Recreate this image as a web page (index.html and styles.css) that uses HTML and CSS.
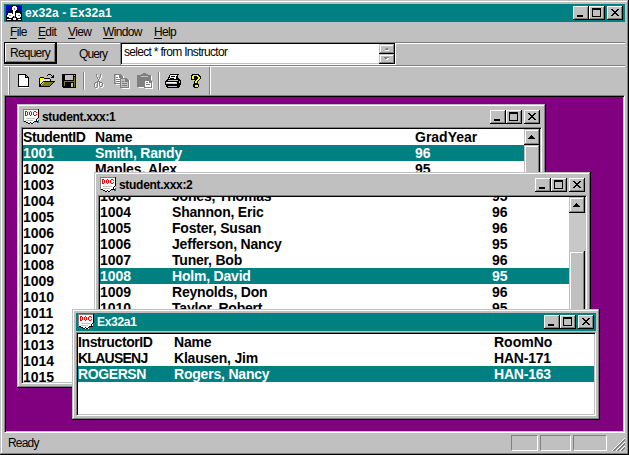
FILE: index.html
```
<!DOCTYPE html>
<html lang="en">
<head>
<meta charset="utf-8">
<title>ex32a - Ex32a1</title>
<link rel="stylesheet" href="styles.css">
</head>
<body>
<svg width="0" height="0" class="defs">
  <symbol id="doc" viewBox="0 0 16 16">
    <path fill="#fff" d="M1 1h14v11h-2v1h-2v2H9v-1H8v1H5v-1H4v-1H1z"/>
    <path fill="#808080" d="M0 0h15v1H0zM0 0h1v13H0z"/>
    <path fill="#000" d="M15 0h1v9h-1zM14 9h1v1h-1zM13 10h1v3h-1zM14 12h1v1h-1zM11 12h2v1h-2zM10 13h1v1h-1zM8 14h2v1H8zM7 13h1v1H7zM5 14h2v1H5zM3 13h2v1H3zM1 12h2v1H1z"/>
    <path fill="#c0c0c0" d="M3 9h9v1H3zM3 11h7v1H3z"/>
    <path fill="#008080" d="M14 13h2v1h-2zM15 11h1v2h-1z"/>
    <path fill="#f00" d="M2 2h1v5H2zM3 2h1v1H3zM3 6h1v1H3zM4 3h1v3H4zM7 2h1v1H7zM6 3h1v3H6zM8 3h1v3H8zM7 6h1v1H7zM11 2h2v1h-2zM10 3h1v3h-1zM11 6h2v1h-2zM13 3h1v1h-1zM13 5h1v1h-1z"/>
  </symbol>
  <symbol id="min" viewBox="0 0 16 14"><path d="M4 9h6v2H4z"/></symbol>
  <symbol id="max" viewBox="0 0 16 14"><path fill-rule="evenodd" d="M3 2h9v9H3zM4 4v6h7V4z"/></symbol>
  <symbol id="close" viewBox="0 0 16 14"><path d="M4 3h2v1H4zM10 3h2v1h-2zM5 4h2v1H5zM9 4h2v1H9zM6 5h4v1H6zM7 6h2v1H7zM6 7h4v1H6zM5 8h2v1H5zM9 8h2v1H9zM4 9h2v1H4zM10 9h2v1h-2z"/></symbol>
  <symbol id="up" viewBox="0 0 16 16"><path d="M7 6h1v1H7zM6 7h3v1H6zM5 8h5v1H5zM4 9h7v1H4z"/></symbol>
</svg>

<main class="app">
  <header class="title active">
    <svg class="ico" viewBox="0 0 16 16">
      <path fill="#000" d="M0 0h16v16H0z"/>
      <path fill="#0000c0" d="M0 0h6v5H3v3H0zM11 0h5v7h-3V5h-2zM0 8h2v2H0z"/>
      <path fill="#fff" d="M7 1h3v1h1v3h-1v1H7V5H6V2h1zM2 8h4v1h1v3H6v1H3v-1H1v-2h1zM10 8h4v1h1v3h-1v1h-3v-1h-1zM7 6h2v5H7zM1 14h4v1H1zM7 13h3v2H7zM12 14h3v1h-3z"/>
      <path fill="#808080" d="M8 3h1v2H8zM3 10h2v1H3zM12 10h2v1h-2zM8 11h1v2H8z"/>
    </svg>
    <h1 class="caption main-caption">ex32a - Ex32a1</h1>
    <div class="controls"><button><svg><use href="#min"/></svg></button><button><svg><use href="#max"/></svg></button><button class="x"><svg><use href="#close"/></svg></button></div>
  </header>
  <nav class="menu"><a><u>F</u>ile</a><a><u>E</u>dit</a><a><u>V</u>iew</a><a><u>W</u>indow</a><a><u>H</u>elp</a></nav>

  <section class="query">
    <button class="requery">Requery</button>
    <label class="qlabel">Query</label>
    <div class="edit"><span class="sql">select * from Instructor</span>
      <div class="spin">
        <div class="spin-btn"><svg viewBox="0 0 16 10"><path fill="#808080" d="M7 4h2v1H7zM6 5h3v1H6z"/><path fill="#fff" d="M6 6h4v1H6z"/></svg></div>
        <div class="spin-btn"><svg viewBox="0 0 16 10"><path fill="#808080" d="M5 3h5v1H5zM6 4h2v1H6z"/><path fill="#fff" d="M8 4h2v1H8zM7 5h2v1H7z"/></svg></div>
      </div>
    </div>
  </section>

  <section class="tools">
    <div class="tools-group">
      <svg class="t-new" viewBox="0 0 16 16"><path fill="#fff" d="M3 2h7v3h3v10H3z"/><path d="M2 1h8v1H2zM2 1h1v13H2zM2 13h11v1H2zM12 4h1v10h-1zM9 2h1v3H9zM9 4h4v1H9zM10 2h1v1h-1zM11 3h1v1h-1z"/></svg>
      <svg class="t-open" viewBox="0 0 16 16"><path fill="#ff0" d="M1 5h4v1h6v3H5v1H4v1H3v1H2v1H1z"/><path fill="#fff" d="M2 6h1v1H2zM4 6h1v1H4zM3 7h1v1H3zM5 7h1v1H5zM7 7h1v1H7zM9 7h1v1H9zM2 8h1v1H2zM1 9h1v1H1zM3 9h1v1H3z"/><path fill="#808000" d="M5 9h10v1h-1v1h-1v1h-1v1h-1v1H1v-1h1v-1h1v-1h1v-1h1z"/><path d="M1 4h4v1H1zM0 5h1v9H0zM5 5h6v1H5zM11 6h1v2h-1zM4 8h12v1H4zM3 9h1v1H3zM2 10h1v1H2zM1 11h1v2H1zM0 13h11v1H0zM11 12h1v1h-1zM12 11h1v1h-1zM13 10h1v1h-1zM14 9h1v1h-1zM9 1h3v1H9zM8 2h1v1H8zM12 2h1v1h-1zM14 2h1v3h-1zM12 4h3v1h-3zM13 3h1v1h-1z"/></svg>
      <svg class="t-save" viewBox="0 0 16 16"><path d="M1 1h14v14H2v-1H1z"/><path fill="#808000" d="M2 2h1v11h1v-4h9v5h1V4h-1v4H3V2z"/><path fill="#c0c0c0" d="M4 2h8v5H4zM13 2h1v1h-1zM10 10h2v4h-2z"/></svg>
      <i class="sep"></i>
      <svg class="t-cut" viewBox="0 0 16 16"><defs><path id="cut" d="M5 1h1v3H5zM9 1h1v3H9zM6 4h1v2H6zM8 4h1v2H8zM7 6h1v3H7zM6 8h1v1H6zM8 8h1v1H8zM5 9h2v1H5zM8 9h3v1H8zM3 10h1v4H3zM6 10h1v4H6zM4 9h2v1H4zM4 14h2v1H4zM8 10h1v3H8zM11 10h1v3h-1zM9 13h2v1H9z"/></defs><use href="#cut" x="1" y="1" fill="#fff"/><use href="#cut" fill="#808080"/></svg>
      <svg class="t-copy" viewBox="0 0 17 16"><path fill="#fff" d="M2 2h6v1h2v9H2zM8 6h6v1h2v9H8z"/><path fill="#808080" fill-rule="evenodd" d="M0 1h6l3 3v7H0zM1 2v8h7V5H5V2zM2 4h2v1H2zM2 6h5v1H2zM2 8h5v1H2z"/><path fill="#c0c0c0" d="M7 5h5l3 3v6H7z"/><path fill="#808080" fill-rule="evenodd" d="M6 5h6l3 3v7H6zM7 6v8h7V9h-3V6zM8 8h2v1H8zM8 10h5v1H8zM8 12h5v1H8z"/></svg>
      <svg class="t-paste" viewBox="0 0 17 16"><path fill="#fff" d="M2 14h6v1H2zM14 3h1v4h-1zM8 15h8v1H8zM15 9h1v7h-1z"/><path fill="#808080" d="M0 2h4V1h2V0h3v1h2v1h3v5H7v7H0z"/><path fill="#c0c0c0" d="M4 3h7v1H4z"/><path fill="#fff" d="M8 8h5v1h1v5H8z"/><path fill="#808080" fill-rule="evenodd" d="M7 7h6l2 2v6H7zM8 8v6h6v-4h-2V8zM9 9h2v1H9zM9 11h4v1H9z"/></svg>
      <i class="sep sep-two"></i>
      <svg class="t-print" viewBox="0 0 16 16"><path d="M5 1h9v1h-1v3h1v1h1v1h1v5h-1v2h-1v1H2v-1H1v-2H0V8h1V7h1V6h1V4h1V2h1z"/><path fill="#fff" d="M5 2h7v1h-1v3H4V5h1z"/><path d="M6 3h4v1H6zM5 5h4v1H5z"/><path fill="#c0c0c0" d="M3 7h10v1H2zM1 9h11v2H1zM14 8h1v2h-1zM3 13h9v1H3z"/><path fill="#fff" d="M2 9h9v1H2z"/><path fill="#ff0" d="M8 10h2v1H8z"/></svg>
      <svg class="t-help" viewBox="0 0 16 16"><path d="M4 1h7v1h1v1h1v3h-1v1h-1v1h-1v3h1v3h-1v1H6v-1H5v-3h1V8h1V7H3V2h1z"/><path fill="#ff0" d="M5 2h5v1h1v1h1v2h-1v1h-1v1H9v2H7V8h1V7h1V6h1V4H9V3H6v3H4V3h1zM7 12h3v2H7z"/></svg>
    </div>
  </section>

  <section class="mdi">
    <article class="win win-one">
      <header class="title"><svg class="ico"><use href="#doc"/></svg><h2 class="caption">student.xxx:1</h2>
        <div class="controls"><button><svg><use href="#min"/></svg></button><button><svg><use href="#max"/></svg></button><button class="x"><svg><use href="#close"/></svg></button></div></header>
      <div class="client">
        <div class="rows">
          <div class="row"><span class="tight">StudentID</span><span>Name</span><span class="num">GradYear</span></div>
          <div class="row sel"><span class="num">1001</span><span>Smith, Randy</span><span class="num">96</span></div>
          <div class="row"><span class="num">1002</span><span>Maples, Alex</span><span class="num">95</span></div>
          <div class="row"><span class="num">1003</span></div>
          <div class="row"><span class="num">1004</span></div>
          <div class="row"><span class="num">1005</span></div>
          <div class="row"><span class="num">1006</span></div>
          <div class="row"><span class="num">1007</span></div>
          <div class="row"><span class="num">1008</span></div>
          <div class="row"><span class="num">1009</span></div>
          <div class="row"><span class="num">1010</span></div>
          <div class="row"><span class="num">1011</span></div>
          <div class="row"><span class="num">1012</span></div>
          <div class="row"><span class="num">1013</span></div>
          <div class="row"><span class="num">1014</span></div>
          <div class="row"><span class="num">1015</span></div>
        </div>
        <div class="scroll"><svg class="arrow"><use href="#up"/></svg><div class="thumb"></div></div>
      </div>
    </article>

    <article class="win win-two">
      <header class="title"><svg class="ico"><use href="#doc"/></svg><h2 class="caption">student.xxx:2</h2>
        <div class="controls"><button><svg><use href="#min"/></svg></button><button><svg><use href="#max"/></svg></button><button class="x"><svg><use href="#close"/></svg></button></div></header>
      <div class="client">
        <div class="rows scrolled">
          <div class="row"><span class="num">1003</span><span>Jones, Thomas</span><span class="num">95</span></div>
          <div class="row"><span class="num">1004</span><span>Shannon, Eric</span><span class="num">96</span></div>
          <div class="row"><span class="num">1005</span><span>Foster, Susan</span><span class="num">96</span></div>
          <div class="row"><span class="num">1006</span><span>Jefferson, Nancy</span><span class="num">95</span></div>
          <div class="row"><span class="num">1007</span><span>Tuner, Bob</span><span class="num">96</span></div>
          <div class="row sel"><span class="num">1008</span><span>Holm, David</span><span class="num">95</span></div>
          <div class="row"><span class="num">1009</span><span>Reynolds, Don</span><span class="num">96</span></div>
          <div class="row"><span class="num">1010</span><span>Taylor, Robert</span><span class="num">95</span></div>
        </div>
        <div class="scroll"><svg class="arrow"><use href="#up"/></svg><div class="track"></div><div class="thumb"></div></div>
      </div>
    </article>

    <article class="win win-three">
      <header class="title active"><svg class="ico"><use href="#doc"/></svg><h2 class="caption">Ex32a1</h2>
        <div class="controls"><button><svg><use href="#min"/></svg></button><button><svg><use href="#max"/></svg></button><button class="x"><svg><use href="#close"/></svg></button></div></header>
      <div class="client">
        <div class="rows">
          <div class="row"><span class="tight">InstructorID</span><span>Name</span><span class="num">RoomNo</span></div>
          <div class="row"><span class="caps">KLAUSENJ</span><span>Klausen, Jim</span><span>HAN-171</span></div>
          <div class="row sel"><span class="tight">ROGERSN</span><span>Rogers, Nancy</span><span>HAN-163</span></div>
        </div>
      </div>
    </article>
  </section>

  <footer class="status"><span class="ready">Ready</span><i class="pane p1"></i><i class="pane p2"></i><i class="pane p3"></i>
    <svg class="grip" viewBox="0 0 13 13"><path stroke="#fff" d="M0 13L13 0M4 13L13 4M8 13L13 8"/><path stroke="#808080" stroke-width="1.6" d="M1.5 13L13 1.5M5.5 13L13 5.5M9.5 13L13 9.5"/></svg>
  </footer>
</main>
</body>
</html>
```
FILE: styles.css
```
* { box-sizing: border-box; }
body { margin: 0; overflow: hidden; font: 12px/14px "Liberation Sans", Arial, sans-serif; color: #000; }
.defs { position: absolute; }
svg { display: block; shape-rendering: crispEdges; }
h1, h2 { margin: 0; }
button { margin: 0; padding: 0; border: 0; background: #c0c0c0; color: #000; font: inherit; }

.app {
  width: 629px; height: 455px; padding: 4px;
  display: flex; flex-direction: column;
  background: #c0c0c0;
  box-shadow: inset -1px -1px #000, inset 1px 1px #c0c0c0, inset -2px -2px #808080, inset 2px 2px #fff;
}

.title { display: flex; align-items: center; height: 18px; padding: 0 2px; flex: none; }
.title.active { background: #008080; color: #fff; }
.ico { width: 16px; height: 16px; flex: none; }
.caption { flex: 1; margin-left: 3px; font-size: 12px; line-height: 18px; font-weight: 700; letter-spacing: -0.3px; white-space: nowrap; }
.main-caption { letter-spacing: 0.1px; }
.controls { display: flex; }
.controls button {
  width: 16px; height: 14px;
  box-shadow: inset -1px -1px #000, inset 1px 1px #fff, inset -2px -2px #808080;
}
.controls .x { margin-left: 2px; }
.controls svg { width: 16px; height: 14px; }

.menu { display: grid; grid-template-columns: 28px 30px 35px 51px 40px; height: 20px; padding-left: 6px; line-height: 20px; letter-spacing: -0.65px; }
.menu u { text-underline-offset: 2px; text-decoration-thickness: 1px; }

.query { display: flex; height: 25px; flex: none; border-top: 1px solid #808080; box-shadow: inset 0 1px #fff, inset 0 -1px #fff, inset 0 -2px #808080; }
.requery {
  width: 53px; height: 22px; margin-top: -1px; line-height: 20px; letter-spacing: -0.8px;
  border: 1px solid #000; border-right-width: 2px; border-bottom-width: 2px;
  box-shadow: inset 1px 1px #fff, inset -1px -1px #808080;
}
.qlabel { width: 63px; padding-left: 22px; line-height: 23px; letter-spacing: -0.9px; }
.edit {
  display: flex; justify-content: space-between; width: 276px; height: 23px; margin-top: -1px; padding: 2px 1px 2px 2px; background: #fff;
  box-shadow: inset 1px 1px #808080, inset -1px -1px #fff, inset 2px 2px #000, inset -2px -2px #c0c0c0;
}
.sql { padding-left: 2px; line-height: 16px; letter-spacing: -0.7px; }
.spin { width: 16px; height: 20px; display: grid; grid-template-rows: 10px 10px; background: #c0c0c0; }
.spin-btn { box-shadow: inset -1px -1px #000, inset 1px 1px #c0c0c0, inset -2px -2px #808080, inset 2px 2px #fff; }
.spin-btn svg { width: 16px; height: 10px; }

.tools { height: 28px; padding-left: 4px; flex: none; }
.tools-group { display: flex; align-items: center; width: 203px; height: 28px; padding-left: 6px; border-left: 1px solid #fff; border-right: 1px solid #fff; box-shadow: inset 1px 0 #808080, inset -1px 0 #808080; }
.tools-group svg { width: 16px; height: 16px; margin-top: -1px; flex: none; }
.tools-group .t-new { margin-left: 1px; }
.tools-group .t-open { margin-left: 7px; }
.tools-group .t-save { margin-left: 6px; }
.sep { width: 2px; height: 18px; margin-left: 6px; flex: none; background: linear-gradient(90deg, #808080 50%, #fff 50%); }
.sep-two { margin-left: 4px; }
.tools-group .t-cut { margin-left: 6px; }
.tools-group .t-copy { width: 17px; margin-left: 7px; }
.tools-group .t-paste { width: 17px; margin-left: 6px; }
.tools-group .t-print { margin-left: 5px; }
.tools-group .t-help { margin-left: 7px; }

.mdi {
  position: relative; height: 338px; flex: none; overflow: hidden; background: #800080;
  border: 1px solid; border-color: #808080 #fff #fff #808080;
  box-shadow: inset 1px 1px #000, inset -1px -1px #c0c0c0;
}
.win {
  position: absolute; display: flex; flex-direction: column; padding: 4px; background: #c0c0c0;
  box-shadow: inset -1px -1px #000, inset 1px 1px #c0c0c0, inset -2px -2px #808080, inset 2px 2px #fff;
}
.win-one { left: 12px; top: 8px; width: 529px; height: 284px; }
.win-two { left: 89px; top: 76px; width: 497px; height: 200px; }
.win-three { left: 67px; top: 213px; width: 528px; height: 111px; }
.client { flex: 1; min-height: 0; display: flex; overflow: hidden; margin-top: 1px; background: #fff; border: 1px solid; border-color: #808080 #fff #fff #808080; padding: 1px; box-shadow: inset 1px 1px #000, inset -1px -1px #c0c0c0; }
.rows { flex: 1; overflow: hidden; font-size: 14px; font-weight: 700; line-height: 16px; }
.scrolled > :first-child { margin-top: -9px; }
.row { display: grid; grid-template-columns: 72px 320px 1fr; height: 16px; white-space: nowrap; letter-spacing: -0.2px; }
.win-three .row { grid-template-columns: 96px 320px 1fr; }
.num { letter-spacing: 0; }
.tight { letter-spacing: -0.4px; }
.caps { letter-spacing: -0.75px; }
.sel { background: #008080; color: #fff; }
.scroll { width: 16px; display: flex; flex-direction: column; background: #c8c8c8; }
.arrow, .thumb { background: #c0c0c0; box-shadow: inset -1px -1px #000, inset 1px 1px #c0c0c0, inset -2px -2px #808080, inset 2px 2px #fff; }
.arrow { width: 16px; height: 16px; flex: none; }
.track { height: 38px; flex: none; }
.thumb { flex: 1; }

.status { display: flex; height: 20px; padding-top: 2px; }
.ready { width: 507px; padding-left: 4px; line-height: 17px; letter-spacing: -0.8px; flex: none; }
.pane { height: 16px; flex: none; border: 1px solid; border-color: #808080 #fff #fff #808080; }
.p1 { width: 27px; margin-right: 2px; }
.p2 { width: 31px; margin-right: 2px; }
.p3 { width: 34px; }
.grip { width: 13px; height: 13px; margin: 3px 0 0 5px; }
```
